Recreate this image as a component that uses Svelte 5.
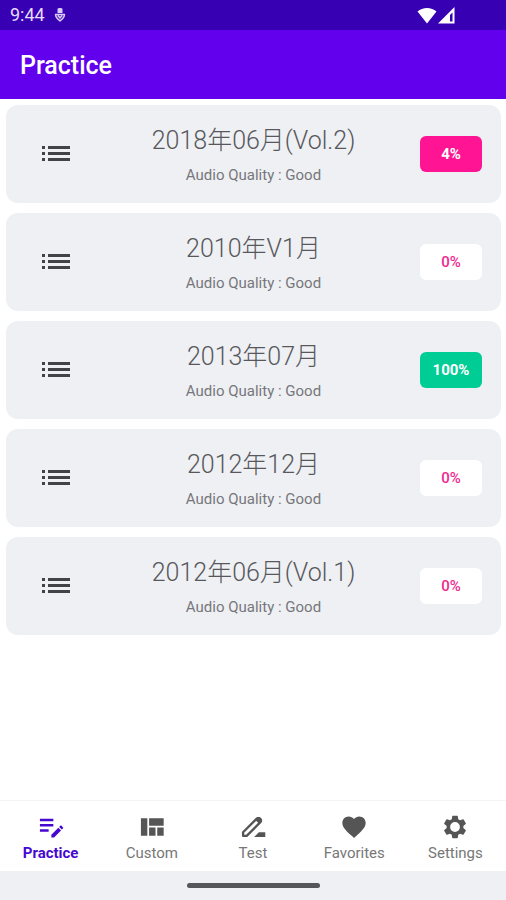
<script lang="ts">
  interface Exam {
    title: string;
    quality: string;
    progress: number;
  }

  const exams: Exam[] = [
    { title: '2018年06月(Vol.2)', quality: 'Good', progress: 4 },
    { title: '2010年V1月', quality: 'Good', progress: 0 },
    { title: '2013年07月', quality: 'Good', progress: 100 },
    { title: '2012年12月', quality: 'Good', progress: 0 },
    { title: '2012年06月(Vol.1)', quality: 'Good', progress: 0 },
  ];

  const tabs = [
    { id: 'practice', label: 'Practice' },
    { id: 'custom', label: 'Custom' },
    { id: 'test', label: 'Test' },
    { id: 'favorites', label: 'Favorites' },
    { id: 'settings', label: 'Settings' },
  ];

  let activeTab = $state('practice');
</script>

<div class="app">
  <div class="status-bar">
    <span class="time">9:44</span>
    <svg class="debug" width="12" height="16" viewBox="0 0 12 16" aria-hidden="true">
      <path d="M3.500 1.800C4.200.8 7.800.8 8.500 1.800V6h-5z" fill="#d9ccf7" />
      <path d="M1 7.500h10M1.500 7.500c0 3 2 4.500 4.500 6.300 2.500-1.800 4.500-3.300 4.500-6.300M3.800 8.500L6 10.800l2.200-2.300" fill="none" stroke="#d9ccf7" stroke-width="1.500" />
    </svg>
    <div class="signals">
      <svg width="20" height="17" viewBox="0 0 20 17" aria-hidden="true">
        <path d="M.5 4.500C5.500-.3 14.500-.3 19.500 4.500L10 16.500z" fill="#fff" />
      </svg>
      <svg width="17" height="17" viewBox="0 0 17 17" aria-hidden="true">
        <path d="M0 16.500L16.500 0v16.500z" fill="#fff" />
        <path d="M12 8l2.500-2.500v9H12z" fill="#3700b3" />
      </svg>
    </div>
  </div>

  <header>
    <h1>Practice</h1>
  </header>

  <main>
    <ul class="exams">
      {#each exams as exam}
        <li class="card">
          <svg class="list-icon" width="28" height="18" viewBox="0 0 28 18" aria-hidden="true">
            <path d="M0 1h3v3H0zM0 7h3v3H0zM0 13h3v3H0zM6 1h22v3H6zM6 7h22v3H6zM6 13h22v3H6z" />
          </svg>
          <div class="info">
            <h2>{exam.title}</h2>
            <p>Audio Quality : {exam.quality}</p>
          </div>
          <span class="badge" class:started={exam.progress > 0} class:done={exam.progress === 100}>
            {exam.progress}%
          </span>
        </li>
      {/each}
    </ul>
  </main>

  <nav>
    {#each tabs as tab}
      <a href="#{tab.id}" class:active={activeTab === tab.id} onclick={() => (activeTab = tab.id)}>
        <svg width="28" height="28" viewBox="0 0 24 24" fill="currentColor" aria-hidden="true">
          {#if tab.id === 'practice'}
            <path d="M2.500 5h11.500v2H2.500zM2.500 9.500h11.500v2H2.500zM2.500 14h7.500v2H2.500z" />
            <path d="M12.300 18.600l6-6 2.300 2.300-6 6h-2.300zM19 11.900l.9-.9c.3-.3.800-.3 1.100 0l1.200 1.200c.3.300.3.800 0 1.100l-.9.900z" />
          {:else if tab.id === 'custom'}
            <path d="M2.500 4.500h5.500v15H2.500zM9.500 4.500H22v6.500H9.500zM9.500 12.500h5.500v7H9.500zM16.500 12.500H22v7h-5.500z" />
          {:else if tab.id === 'test'}
            <path d="M3.500 16.500L15 5a1.600 1.600 0 0 1 2.300 0l.8.800a1.600 1.600 0 0 1 0 2.300L6.600 19.600H3.500z" fill="none" stroke="currentColor" stroke-width="2" stroke-linejoin="round" />
            <path d="M14 6l2-2.500h2l1.800 1.800v2L17.500 9.500zM13 20.500l4-4h5.500v4z" />
          {:else if tab.id === 'favorites'}
            <path d="M12 21.350l-1.450-1.320C5.400 15.360 2 12.280 2 8.500 2 5.420 4.420 3 7.500 3c1.740 0 3.410.81 4.500 2.090C13.090 3.810 14.760 3 16.500 3 19.580 3 22 5.420 22 8.500c0 3.780-3.400 6.860-8.550 11.540L12 21.350z" />
          {:else}
            <path d="M19.140 12.940c.04-.3.060-.61.060-.94 0-.32-.02-.64-.07-.94l2.030-1.580c.18-.14.230-.41.120-.61l-1.920-3.320c-.12-.22-.37-.29-.59-.22l-2.390.96c-.5-.38-1.030-.7-1.620-.94l-.36-2.540c-.04-.24-.24-.41-.48-.41h-3.840c-.24 0-.43.17-.47.41l-.36 2.540c-.59.24-1.130.57-1.620.94l-2.390-.96c-.22-.08-.47 0-.59.22L2.740 8.870c-.12.21-.08.47.12.61l2.030 1.580c-.05.3-.09.63-.09.94s.02.64.07.94l-2.030 1.580c-.18.14-.23.41-.12.61l1.920 3.320c.12.22.37.29.59.22l2.390-.96c.5.38 1.030.7 1.620.94l.36 2.540c.05.24.24.41.48.41h3.840c.24 0 .44-.17.47-.41l.36-2.540c.59-.24 1.130-.56 1.620-.94l2.390.96c.22.08.47 0 .59-.22l1.920-3.320c.12-.22.070-.47-.12-.61l-2.010-1.580zM12 16.200a4.200 4.200 0 1 1 0-8.400 4.200 4.200 0 0 1 0 8.400z" />
          {/if}
        </svg>
        <span>{tab.label}</span>
      </a>
    {/each}
  </nav>

  <div class="gesture-bar"><div class="handle"></div></div>
</div>

<style>
  :global(body) {
    background: #fff;
  }

  .app {
    display: flex;
    flex-direction: column;
    min-height: 100vh;
    font-family: Roboto, 'Noto Sans CJK JP', sans-serif;
  }

  .status-bar {
    display: flex;
    align-items: center;
    height: 30px;
    padding: 0 51px 0 10px;
    background: #3700b3;
  }

  .time {
    color: #e6dcfa;
    font-size: 18px;
    line-height: 32px;
  }

  .debug {
    margin-left: 9px;
  }

  .signals {
    display: flex;
    gap: 1px;
    margin-left: auto;
  }

  header {
    padding: 21px 20px 18px;
    background: #6200ee;
  }

  h1 {
    margin: 0;
    color: #fff;
    font-size: 25px;
    font-weight: 500;
    line-height: 30px;
  }

  main {
    flex: 1;
  }

  .exams {
    display: flex;
    flex-direction: column;
    gap: 10px;
    margin: 0;
    padding: 6px 5px 10px 6px;
    list-style: none;
  }

  .card {
    display: grid;
    grid-template-columns: 100px 1fr 100px;
    align-items: center;
    height: 98px;
    border-radius: 12px;
    background: #eef0f4;
  }

  .list-icon {
    justify-self: center;
    fill: #434347;
  }

  .info {
    padding-top: 2px;
    text-align: center;
  }

  h2 {
    margin: 0;
    color: #58585c;
    font-size: 25px;
    font-weight: 300;
    line-height: 36px;
  }

  p {
    margin: 4px 0 0;
    color: #77777b;
    font-size: 15px;
    line-height: 24px;
  }

  .badge {
    justify-self: center;
    width: 62px;
    border-radius: 6px;
    background: #fff;
    color: #f0288f;
    font-size: 15px;
    font-weight: 500;
    line-height: 36px;
    text-align: center;
  }

  .badge.started {
    background: #ff1493;
    color: #fff;
    font-weight: 700;
  }

  .badge.done {
    background: #00cc96;
  }

  nav {
    display: flex;
    border-top: 1px solid #f4f4f4;
    background: #fff;
  }

  nav a {
    display: flex;
    flex: 1;
    flex-direction: column;
    align-items: center;
    gap: 2px;
    padding: 12px 0 8px;
    color: #555;
    font-size: 15px;
    line-height: 20px;
    text-decoration: none;
  }

  nav a span {
    color: #777;
  }

  nav a.active,
  nav a.active span {
    color: #4608d0;
    font-weight: 700;
  }

  .gesture-bar {
    display: flex;
    align-items: center;
    justify-content: center;
    height: 29px;
    background: #eef0f4;
  }

  .handle {
    width: 133px;
    height: 5px;
    border-radius: 3px;
    background: #55565a;
  }
</style>
